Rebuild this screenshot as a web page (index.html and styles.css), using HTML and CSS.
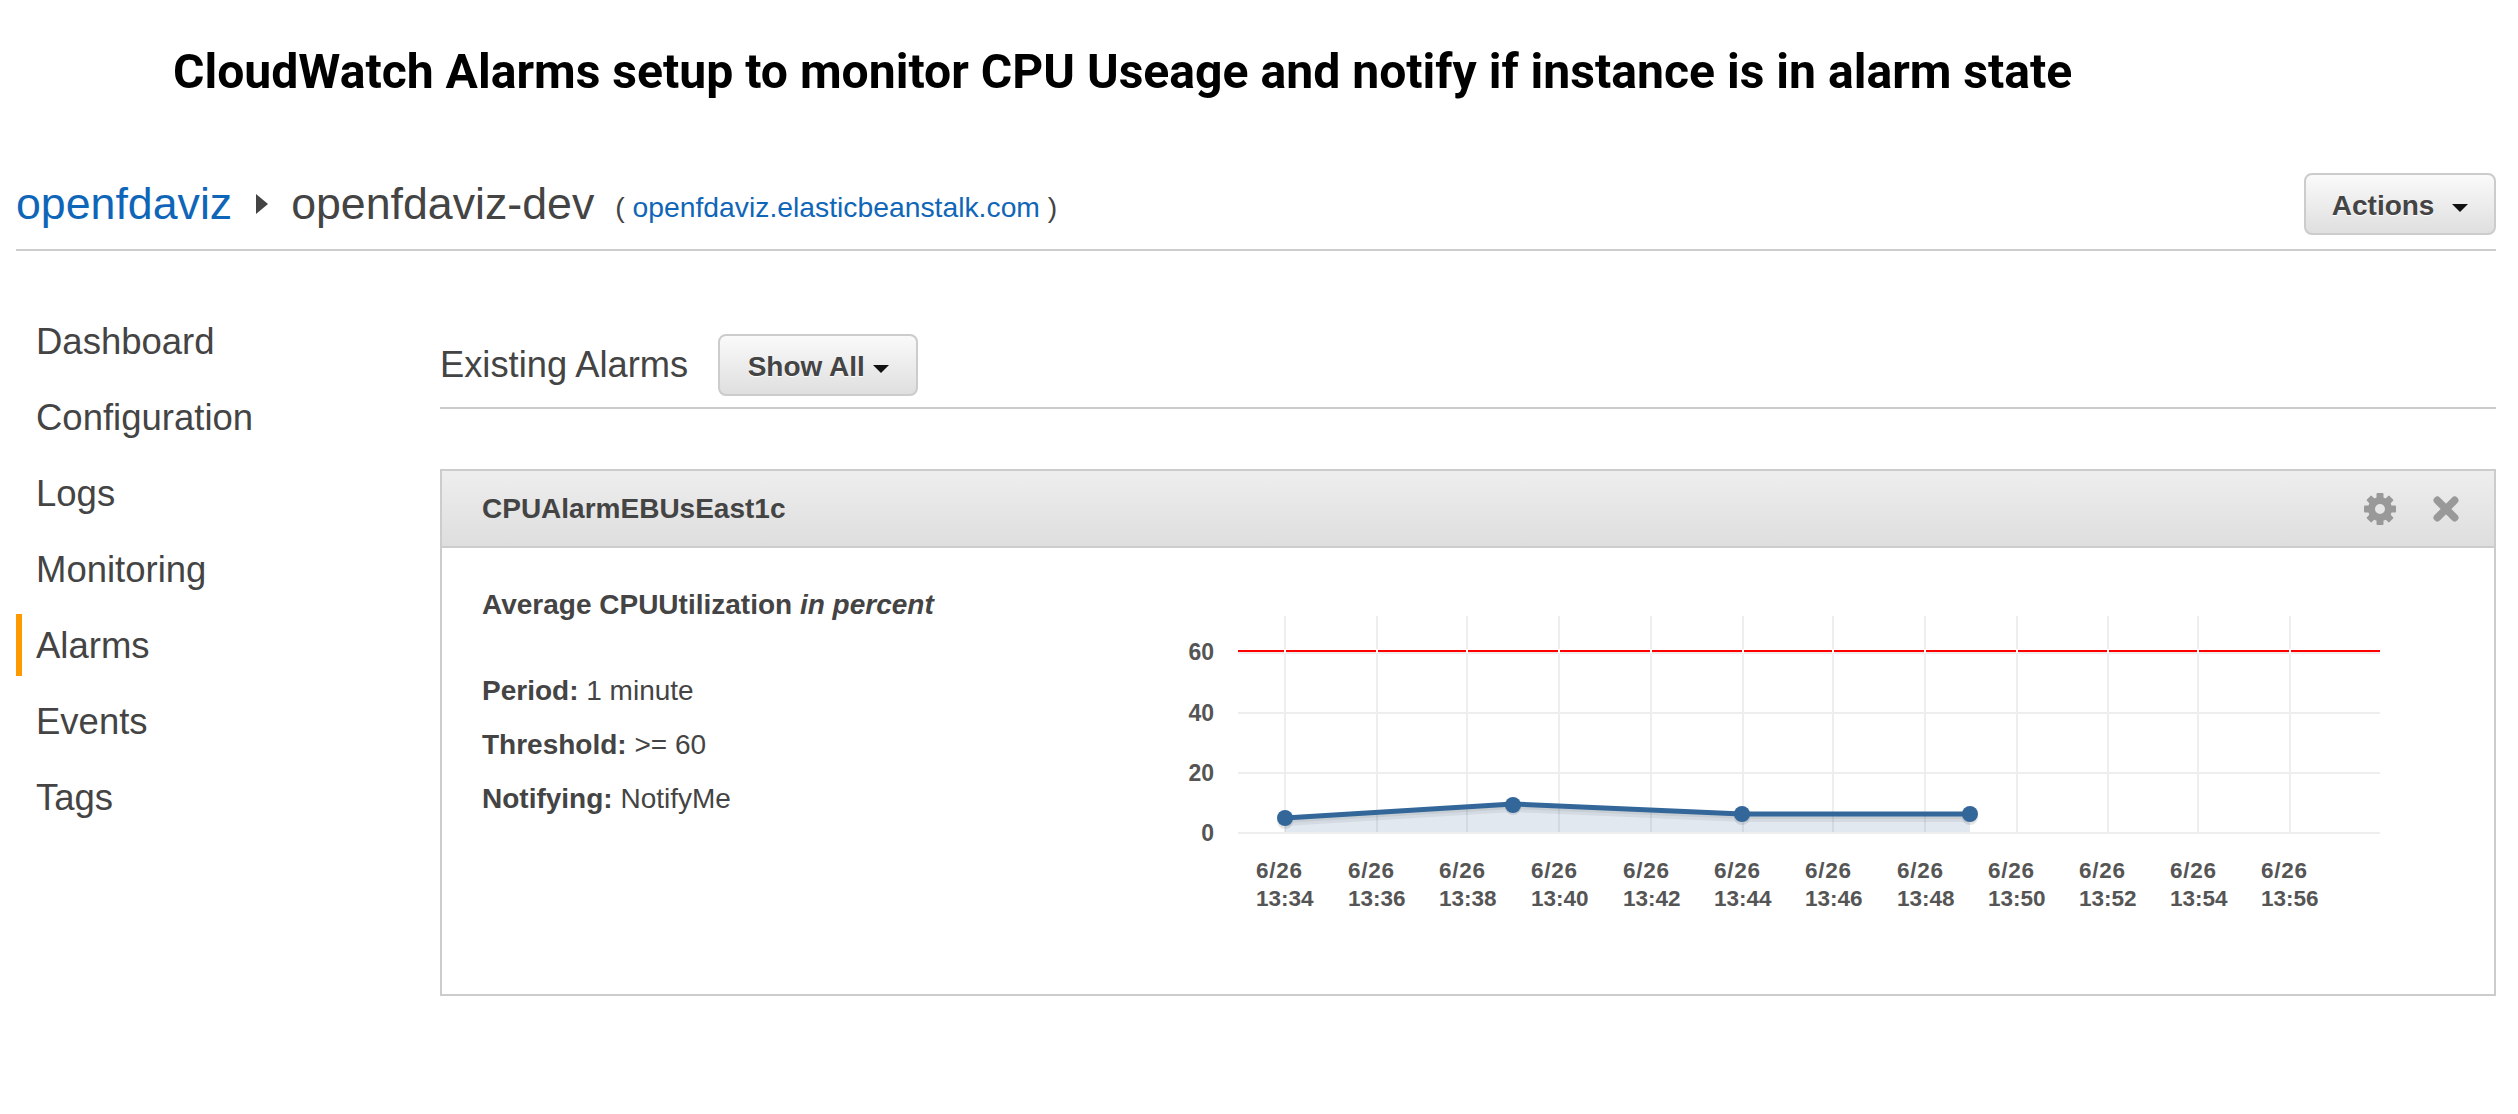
FILE: index.html
```html
<!DOCTYPE html>
<html lang="en">
<head>
    <meta charset="UTF-8">
    <meta name="viewport" content="width=device-width, initial-scale=1.0">
    <title>CloudWatch Alarms</title>
    <link rel="stylesheet" href="styles.css">
</head>
<body>
    <h1 class="page-title">CloudWatch Alarms setup to monitor CPU Useage and notify if instance is in alarm state</h1>

    <header class="env-bar">
        <a class="app-link" href="#">openfdaviz</a>
        <span class="crumb-arrow"></span>
        <span class="env-name">openfdaviz-dev</span>
        <span class="env-url">( <a href="#">openfdaviz.elasticbeanstalk.com</a> )</span>
        <button class="btn btn-actions" type="button">Actions <span class="caret"></span></button>
    </header>

    <div class="main">
        <nav class="side-nav">
            <a href="#">Dashboard</a>
            <a href="#">Configuration</a>
            <a href="#">Logs</a>
            <a href="#">Monitoring</a>
            <a class="active" href="#">Alarms</a>
            <a href="#">Events</a>
            <a href="#">Tags</a>
        </nav>

        <section class="content">
            <div class="section-head">
                <h2>Existing Alarms</h2>
                <button class="btn btn-show" type="button">Show All <span class="caret"></span></button>
            </div>

            <div class="panel">
                <div class="panel-head">
                    <span class="panel-title">CPUAlarmEBUsEast1c</span>
                    <svg class="icon-gear" viewBox="0 0 32 32">
                        <g fill="#999">
                            <rect x="12.5" y="0" width="7" height="7" rx="1"/>
                            <rect x="12.5" y="0" width="7" height="7" rx="1" transform="rotate(45 16 16)"/>
                            <rect x="12.5" y="0" width="7" height="7" rx="1" transform="rotate(90 16 16)"/>
                            <rect x="12.5" y="0" width="7" height="7" rx="1" transform="rotate(135 16 16)"/>
                            <rect x="12.5" y="0" width="7" height="7" rx="1" transform="rotate(180 16 16)"/>
                            <rect x="12.5" y="0" width="7" height="7" rx="1" transform="rotate(225 16 16)"/>
                            <rect x="12.5" y="0" width="7" height="7" rx="1" transform="rotate(270 16 16)"/>
                            <rect x="12.5" y="0" width="7" height="7" rx="1" transform="rotate(315 16 16)"/>
                        </g>
                        <circle cx="16" cy="16" r="8.5" fill="none" stroke="#999" stroke-width="7"/>
                    </svg>
                    <svg class="icon-close" viewBox="0 0 24 24">
                        <path d="M4 4L20 20M20 4L4 20" stroke="#999" stroke-width="7" stroke-linecap="round"/>
                    </svg>
                </div>
                <div class="panel-body">
                    <div class="alarm-info">
                        <p class="metric"><b>Average CPUUtilization <i>in percent</i></b></p>
                        <p><b>Period:</b> 1 minute</p>
                        <p><b>Threshold:</b> &gt;= 60</p>
                        <p><b>Notifying:</b> NotifyMe</p>
                    </div>

                    <svg class="chart" viewBox="0 0 1240 330">
                        <!-- grid -->
                        <g class="grid">
                            <path d="M115 16V232M207 16V232M297 16V232M389 16V232M481 16V232M573 16V232M663 16V232M755 16V232M847 16V232M938 16V232M1028 16V232M1120 16V232"/>
                            <path d="M68 53H1210M68 113H1210M68 173H1210M68 233H1210"/>
                        </g>
                        <path class="threshold" d="M68 51H1210"/>
                        <path class="threshold-cut" d="M115 49V53M207 49V53M297 49V53M389 49V53M481 49V53M573 49V53M663 49V53M755 49V53M847 49V53M938 49V53M1028 49V53M1120 49V53"/>

                        <!-- data -->
                        <path class="area" d="M115 218L343 204L572 214L800 214V232H115Z"/>
                        <path class="line-shadow wide" d="M115 221L343 207L572 217L800 217"/>
                        <path class="line-shadow" d="M115 220L343 206L572 216L800 216"/>
                        <path class="line" d="M115 218L343 204L572 214L800 214"/>
                        <circle class="dot-shadow" cx="115" cy="221" r="8"/>
                        <circle class="dot-shadow" cx="343" cy="207" r="8"/>
                        <circle class="dot-shadow" cx="572" cy="217" r="8"/>
                        <circle class="dot-shadow" cx="800" cy="217" r="8"/>
                        <circle class="dot" cx="115" cy="218" r="8"/>
                        <circle class="dot" cx="343" cy="205" r="8"/>
                        <circle class="dot" cx="572" cy="214" r="8"/>
                        <circle class="dot" cx="800" cy="214" r="8"/>

                        <!-- y axis -->
                        <g class="y-labels">
                            <text x="44" y="60">60</text>
                            <text x="44" y="121">40</text>
                            <text x="44" y="181">20</text>
                            <text x="44" y="241">0</text>
                        </g>

                        <!-- x axis -->
                        <g class="x-labels">
                            <text y="278"><tspan x="86">6/26</tspan><tspan x="86" dy="28">13:34</tspan></text>
                            <text y="278"><tspan x="178">6/26</tspan><tspan x="178" dy="28">13:36</tspan></text>
                            <text y="278"><tspan x="269">6/26</tspan><tspan x="269" dy="28">13:38</tspan></text>
                            <text y="278"><tspan x="361">6/26</tspan><tspan x="361" dy="28">13:40</tspan></text>
                            <text y="278"><tspan x="453">6/26</tspan><tspan x="453" dy="28">13:42</tspan></text>
                            <text y="278"><tspan x="544">6/26</tspan><tspan x="544" dy="28">13:44</tspan></text>
                            <text y="278"><tspan x="635">6/26</tspan><tspan x="635" dy="28">13:46</tspan></text>
                            <text y="278"><tspan x="727">6/26</tspan><tspan x="727" dy="28">13:48</tspan></text>
                            <text y="278"><tspan x="818">6/26</tspan><tspan x="818" dy="28">13:50</tspan></text>
                            <text y="278"><tspan x="909">6/26</tspan><tspan x="909" dy="28">13:52</tspan></text>
                            <text y="278"><tspan x="1000">6/26</tspan><tspan x="1000" dy="28">13:54</tspan></text>
                            <text y="278"><tspan x="1091">6/26</tspan><tspan x="1091" dy="28">13:56</tspan></text>
                        </g>
                    </svg>
                </div>
            </div>
        </section>
    </div>
</body>
</html>
```

FILE: styles.css
```css
body {
    font-family: "Liberation Sans", Arial, sans-serif;
    color: #444;
    background-color: #fff;
    margin: 0;
    padding: 0;
}

a {
    color: #0f66b8;
    text-decoration: none;
}

.page-title {
    font-family: Roboto, sans-serif;
    font-size: 48.1px;
    font-weight: 700;
    line-height: 52px;
    color: #000;
    margin: 0;
    padding: 46px 0 0 173px;
}

.env-bar {
    display: flex;
    align-items: center;
    height: 78px;
    margin: 67px 22px 0 16px;
    padding-bottom: 6px;
    border-bottom: 2px solid #ccc;
}

.app-link {
    font-size: 44.7px;
}

.crumb-arrow {
    width: 0;
    height: 0;
    margin: 0 23px 0 24px;
    border-left: 12px solid #444;
    border-top: 10px solid transparent;
    border-bottom: 10px solid transparent;
}

.env-name {
    font-size: 44.7px;
}

.env-url {
    font-size: 28.3px;
    margin-left: 21px;
    margin-top: 6px;
}

.btn {
    font-family: "Liberation Sans", Arial, sans-serif;
    font-weight: 700;
    font-size: 28px;
    color: #444;
    height: 62px;
    padding: 4px 0 0;
    border: 2px solid #ccc;
    border-radius: 8px;
    background: linear-gradient(#fafafa, #dfdfdf);
    text-shadow: 0 1px 1px #fff;
}

.btn-actions {
    width: 192px;
    margin-left: auto;
}

.btn-show {
    width: 200px;
    margin-left: 30px;
}

.caret {
    display: inline-block;
    width: 0;
    height: 0;
    margin-left: 8px;
    vertical-align: middle;
    border-top: 8px solid #111;
    border-left: 8px solid transparent;
    border-right: 8px solid transparent;
}

.btn-show .caret {
    margin-left: 0;
}

.btn-actions .caret {
    margin-left: 10px;
}

.main {
    display: flex;
    margin-right: 22px;
}

.side-nav {
    display: flex;
    flex-direction: column;
    gap: 14px;
    width: 424px;
    margin: 59px 0 0 16px;
    flex: none;
}

.side-nav a {
    display: flex;
    align-items: center;
    height: 60px;
    padding: 2px 0 0 14px;
    border-left: 6px solid transparent;
    font-size: 36.5px;
    color: #444;
}

.side-nav a.active {
    border-left-color: #f90;
}

.content {
    flex: 1;
}

.section-head {
    display: flex;
    align-items: center;
    height: 62px;
    margin-top: 83px;
    padding-bottom: 11px;
    border-bottom: 2px solid #ccc;
}

.section-head h2 {
    font-size: 36.3px;
    font-weight: 400;
    margin: 0;
}

.panel {
    margin-top: 60px;
    border: 2px solid #ccc;
    height: 523px;
}

.panel-head {
    display: flex;
    align-items: center;
    height: 75px;
    padding: 0 35px 0 40px;
    background: linear-gradient(#eee, #dedede);
    border-bottom: 2px solid #ccc;
}

.panel-title {
    font-size: 28px;
    font-weight: 700;
    margin-right: auto;
}

.icon-gear {
    width: 32px;
    height: 32px;
    margin-right: 37px;
}

.icon-close {
    width: 26px;
    height: 26px;
}

.panel-body {
    display: flex;
}

.alarm-info {
    width: 688px;
    padding: 41px 0 0 40px;
    flex: none;
    font-size: 28px;
}

.alarm-info p {
    margin: 0 0 23px;
    line-height: 31px;
}

.alarm-info .metric {
    margin-bottom: 55px;
}

.chart {
    width: 1240px;
    height: 330px;
    margin-top: 52px;
    flex: none;
}

.grid path {
    stroke: #eee;
    stroke-width: 2;
    fill: none;
}

.threshold {
    stroke: #f00;
    stroke-width: 2;
    fill: none;
}

.threshold-cut {
    stroke: #fff;
    stroke-width: 2;
    fill: none;
}

.area {
    fill: #336699;
    fill-opacity: 0.15;
}

.line {
    stroke: #336699;
    stroke-width: 5;
    fill: none;
}

.line-shadow {
    stroke: #000;
    stroke-opacity: 0.06;
    stroke-width: 6;
    fill: none;
}

.line-shadow.wide {
    stroke-width: 10;
}

.dot {
    fill: #336699;
}

.dot-shadow {
    fill: #000;
    fill-opacity: 0.1;
}

.y-labels text {
    font-size: 23px;
    font-weight: 700;
    fill: #555;
    text-anchor: end;
}

.x-labels text {
    font-size: 22.5px;
    font-weight: 700;
    fill: #555;
}

.x-labels tspan:first-child {
    letter-spacing: 0.7px;
}
```
